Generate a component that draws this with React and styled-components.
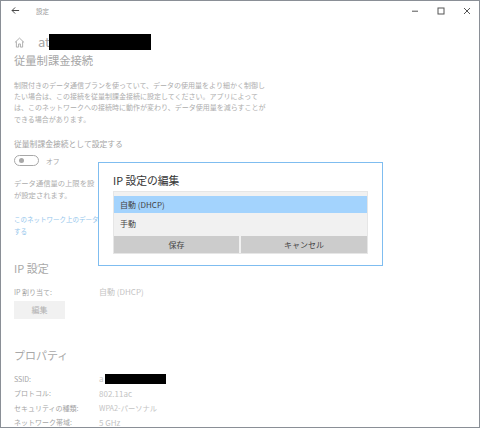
import React from "react";
import styled, { createGlobalStyle } from "styled-components";

const GlobalStyle = createGlobalStyle`
  html, body {
    margin: 0;
    padding: 0;
    background: #fff;
  }
  body {
    font-family: "Noto Sans CJK JP", "Noto Sans", sans-serif;
  }
`;

const App = () => {
  return (
    <Wrap>
      <GlobalStyle />
      <TitleBar>
        <BackIcon viewBox="0 0 10 10">
          <path d="M9 5H1.2M4.6 1.6 1.2 5l3.4 3.4" />
        </BackIcon>
        <TitleText>設定</TitleText>
        <WindowButtons>
          <WindowIcon viewBox="0 0 8 8">
            <path d="M1 4.2H7" />
          </WindowIcon>
          <WindowIcon viewBox="0 0 8 8">
            <rect x="1" y="1" width="6" height="6" />
          </WindowIcon>
          <WindowIcon viewBox="0 0 8 8">
            <path d="M1 1 7 7M7 1 1 7" />
          </WindowIcon>
        </WindowButtons>
      </TitleBar>

      <Content>
        <NetworkRow>
          <HomeIcon viewBox="0 0 12 12">
            <path d="M1 6 6 1.2 11 6M2.6 4.8V11H5V7.6H7V11H9.4V4.8" />
          </HomeIcon>
          <NetworkName>at</NetworkName>
          <Redaction $width={102} $height={16} $gap={-1} />
        </NetworkRow>
        <PageHeading>従量制課金接続</PageHeading>
        <Paragraph>
          制限付きのデータ通信プランを使っていて、データの使用量をより細かく制御し
          <br />
          たい場合は、この接続を従量制課金接続に設定してください。アプリによって
          <br />
          は、このネットワークへの接続時に動作が変わり、データ使用量を減らすことが
          <br />
          できる場合があります。
        </Paragraph>
        <FieldLabel>従量制課金接続として設定する</FieldLabel>
        <ToggleRow>
          <Toggle>
            <ToggleKnob />
          </Toggle>
          <ToggleText>オフ</ToggleText>
        </ToggleRow>
        <LimitText>
          データ通信量の上限を設
          <br />
          が設定されます。
        </LimitText>
        <NetworkLink>
          このネットワーク上のデータ
          <br />
          する
        </NetworkLink>
        <SectionHeading>IP 設定</SectionHeading>
        <IpRows>
          <InfoRow>
            <InfoLabel>IP 割り当て:</InfoLabel>
            <InfoValue>自動 (DHCP)</InfoValue>
          </InfoRow>
        </IpRows>
        <EditButton>編集</EditButton>
        <PropertyHeading>プロパティ</PropertyHeading>
        <PropertyList>
          <InfoRow>
            <InfoLabel>SSID:</InfoLabel>
            <InfoValue>
              a<Redaction $width={61} $height={10} $gap={1} />
            </InfoValue>
          </InfoRow>
          <InfoRow>
            <InfoLabel>プロトコル:</InfoLabel>
            <InfoValue>802.11ac</InfoValue>
          </InfoRow>
          <InfoRow>
            <InfoLabel>セキュリティの種類:</InfoLabel>
            <InfoValue $size={7.3}>WPA2-パーソナル</InfoValue>
          </InfoRow>
          <InfoRow>
            <InfoLabel>ネットワーク帯域:</InfoLabel>
            <InfoValue>5 GHz</InfoValue>
          </InfoRow>
        </PropertyList>
      </Content>

      <Dialog>
        <DialogTitle>IP 設定の編集</DialogTitle>
        <DialogBody>
          <Options>
            <Option $selected>自動 (DHCP)</Option>
            <Option>手動</Option>
          </Options>
          <DialogButtons>
            <DialogButton>保存</DialogButton>
            <DialogButton>キャンセル</DialogButton>
          </DialogButtons>
        </DialogBody>
      </Dialog>
    </Wrap>
  );
};

export default App;

const Wrap = styled.div`
  position: relative;
  box-sizing: border-box;
  width: 480px;
  height: 428px;
  overflow: hidden;
  background: #fff;
  border: 1px solid #8a8f96;
`;
const TitleBar = styled.div`
  display: flex;
  align-items: center;
  height: 19px;
  padding-left: 10px;
`;
const BackIcon = styled.svg`
  width: 9px;
  height: 9px;
  fill: none;
  stroke: #333;
  stroke-width: 1;
`;
const TitleText = styled.span`
  margin-left: 16px;
  font-size: 6.5px;
  color: #9a9a9a;
`;
const WindowButtons = styled.div`
  display: flex;
  gap: 18px;
  margin-left: auto;
  margin-right: 8px;
`;
const WindowIcon = styled.svg`
  width: 8px;
  height: 8px;
  fill: none;
  stroke: #555;
  stroke-width: 1;
`;
const Content = styled.div`
  padding: 12px 0 0 13px;
`;
const NetworkRow = styled.div`
  display: flex;
  align-items: center;
  height: 20px;
`;
const HomeIcon = styled.svg`
  width: 11px;
  height: 11px;
  fill: none;
  stroke: #a8a8a8;
  stroke-width: 1;
`;
const NetworkName = styled.span`
  margin-left: 13px;
  font-size: 13px;
  line-height: 16px;
  color: #a5a5a5;
`;
const Redaction = styled.span`
  display: inline-block;
  flex-shrink: 0;
  margin-left: ${({ $gap }) => $gap || 0}px;
  width: ${({ $width }) => $width}px;
  height: ${({ $height }) => $height}px;
  background: #000;
`;
const PageHeading = styled.h1`
  margin: 0;
  font-size: 11.3px;
  font-weight: 400;
  line-height: 16px;
  color: #a8a8a8;
`;
const Paragraph = styled.p`
  margin: 11.7px 0 0;
  font-size: 7px;
  line-height: 11.3px;
  color: #adadad;
  white-space: nowrap;
`;
const FieldLabel = styled.div`
  margin-top: 13.6px;
  font-size: 7.8px;
  line-height: 11px;
  color: #a5a5a5;
`;
const ToggleRow = styled.div`
  display: flex;
  align-items: center;
  margin-top: 6px;
  height: 11px;
`;
const Toggle = styled.div`
  display: flex;
  align-items: center;
  box-sizing: border-box;
  width: 25px;
  height: 11px;
  padding-left: 4px;
  border: 1px solid #a8a8a8;
  border-radius: 6px;
`;
const ToggleKnob = styled.div`
  width: 5px;
  height: 5px;
  border-radius: 50%;
  background: #a8a8a8;
`;
const ToggleText = styled.span`
  margin-left: 7px;
  font-size: 6.85px;
  color: #a5a5a5;
`;
const LimitText = styled.p`
  margin: 12px 0 0;
  font-size: 7.3px;
  line-height: 11.3px;
  color: #adadad;
  white-space: nowrap;
`;
const NetworkLink = styled.p`
  margin: 13.3px 0 0;
  font-size: 6.5px;
  line-height: 11.3px;
  color: #94c6ec;
  white-space: nowrap;
`;
const SectionHeading = styled.h2`
  margin: 23px 0 0;
  font-size: 11px;
  font-weight: 400;
  line-height: 16px;
  color: #a8a8a8;
`;
const IpRows = styled.div`
  margin-top: 8.7px;
`;
const InfoRow = styled.div`
  display: flex;
  align-items: center;
  height: 14.6px;
  font-size: 7px;
`;
const InfoLabel = styled.span`
  width: 85px;
  color: #a5a5a5;
`;
const InfoValue = styled.span`
  display: flex;
  align-items: center;
  font-size: ${({ $size }) => $size || 8}px;
  color: #c4c4c4;
`;
const EditButton = styled.div`
  display: flex;
  align-items: center;
  justify-content: center;
  width: 51px;
  height: 18px;
  margin-top: 1.7px;
  font-size: 8px;
  color: #b0b0b0;
  background: #f1f1f1;
`;
const PropertyHeading = styled.h2`
  margin: 27.7px 0 0;
  font-size: 11px;
  font-weight: 400;
  line-height: 16px;
  color: #a8a8a8;
`;
const PropertyList = styled.div`
  margin-top: 8.7px;
`;
const Dialog = styled.div`
  position: absolute;
  top: 161px;
  left: 97px;
  box-sizing: border-box;
  width: 285px;
  height: 104px;
  padding: 9px 14px 0;
  background: #fff;
  border: 1px solid #7fbdf0;
`;
const DialogTitle = styled.div`
  font-size: 10.8px;
  line-height: 16px;
  color: #333;
`;
const DialogBody = styled.div`
  margin-top: 3px;
  border: 1px solid #e6e6e6;
  background: #f1f1f1;
`;
const Options = styled.div`
  display: flex;
  flex-direction: column;
  padding: 4px 0 3px;
`;
const Option = styled.div`
  display: flex;
  align-items: center;
  height: ${({ $selected }) => ($selected ? 17 : 20)}px;
  padding-left: 6px;
  font-size: 8px;
  color: #444;
  background: ${({ $selected }) => ($selected ? "#a3d3fd" : "transparent")};
`;
const DialogButtons = styled.div`
  display: grid;
  grid-template-columns: 125px 1fr;
  gap: 2px;
`;
const DialogButton = styled.div`
  display: flex;
  align-items: center;
  justify-content: center;
  height: 17px;
  font-size: 8px;
  color: #444;
  background: #cccccc;
`;
